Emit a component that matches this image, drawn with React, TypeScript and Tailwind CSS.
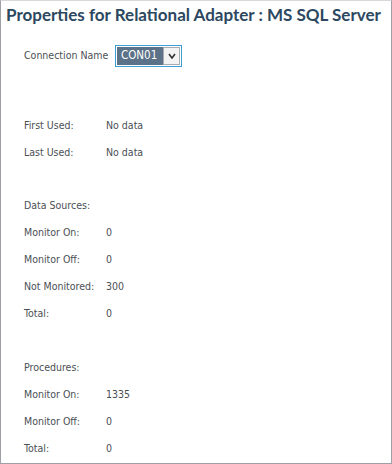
import React from 'react';

const rows = {
  usage: [
    ['First Used:', 'No data'],
    ['Last Used:', 'No data'],
  ],
  sources: [
    ['Monitor On:', '0'],
    ['Monitor Off:', '0'],
    ['Not Monitored:', '300'],
    ['Total:', '0'],
  ],
  procedures: [
    ['Monitor On:', '1335'],
    ['Monitor Off:', '0'],
    ['Total:', '0'],
  ],
};

const Row = ({ label, value }: { label: string; value?: string }) => (
  <div className="flex h-[27px] items-center whitespace-nowrap">
    <span className="w-[82px] shrink-0">{label}</span>
    {value !== undefined && <span>{value}</span>}
  </div>
);

export default function App() {
  return (
    <div
      className="h-[464px] w-[392px] overflow-hidden border border-[#9da1a6] border-t-[#d6d8da] bg-white text-[10.5px] text-[#4b4f54]"
      style={{ fontFamily: '"DejaVu Sans Condensed", "DejaVu Sans", sans-serif' }}
    >
      <h1
        className="whitespace-nowrap px-[5px] text-[17px] font-bold leading-[28px] text-[#2c4860]"
        style={{ fontFamily: 'Lato, "Liberation Sans", sans-serif' }}
      >
        Properties for Relational Adapter : MS SQL Server
      </h1>

      <div className="pl-[23px]">
        {/* connection picker */}
        <div className="mt-[16px] flex items-center whitespace-nowrap">
          <span className="w-[91px] shrink-0">Connection Name</span>
          <div className="flex h-[22px] w-[67px] items-stretch border border-[#3b9fd6] bg-white p-px">
            <div className="flex w-[46px] items-center bg-[#5b7288] pl-[4px] text-[11.5px] text-white">CON01</div>
            <div className="flex flex-1 items-center justify-center border border-[#a9adb1] bg-[#f3f3f3]">
              <svg width="8" height="6" viewBox="0 0 8 6">
                <path d="M1 1 L4 5 L7 1" fill="none" stroke="#333" strokeWidth="1.6" />
              </svg>
            </div>
          </div>
        </div>

        <div className="mt-[45px]">
          {rows.usage.map(([l, v]) => (
            <Row key={l} label={l} value={v} />
          ))}
        </div>

        <div className="mt-[26px]">
          <Row label="Data Sources:" />
          {rows.sources.map(([l, v]) => (
            <Row key={l} label={l} value={v} />
          ))}
        </div>

        <div className="mt-[27px]">
          <Row label="Procedures:" />
          {rows.procedures.map(([l, v]) => (
            <Row key={l} label={l} value={v} />
          ))}
        </div>
      </div>
    </div>
  );
}
